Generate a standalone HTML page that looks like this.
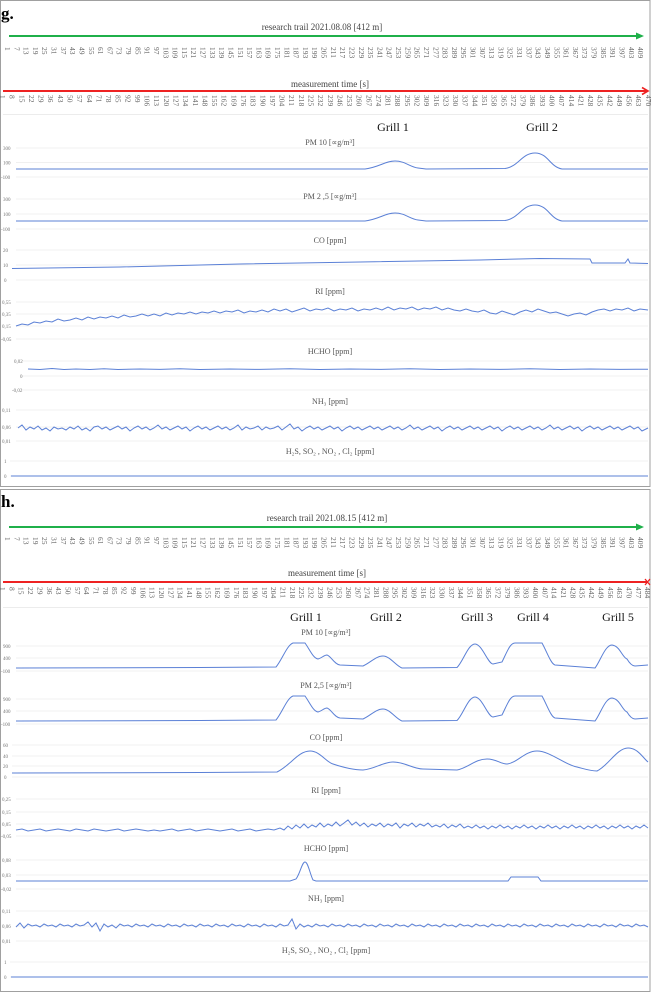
<!DOCTYPE html>
<html><head><meta charset="utf-8">
<style>
html,body{margin:0;padding:0;background:#fff;}
svg{display:block;}
.t{font-family:"Liberation Serif",serif;}
</style></head>
<body>
<svg width="651" height="992" viewBox="0 0 651 992" xmlns="http://www.w3.org/2000/svg" class="t">
<rect x="0.5" y="0.5" width="649.5" height="486" fill="#fff" stroke="#a0a0a0"/>
<rect x="0.5" y="489.5" width="649.5" height="502" fill="#fff" stroke="#a0a0a0"/>

<!-- ===== PANEL g ===== -->
<text x="1" y="19" font-size="17" font-weight="bold" fill="#000">g.</text>
<text x="322" y="30" font-size="9" fill="#444" text-anchor="middle">research trail  2021.08.08 [412 m]</text>
<line x1="9" y1="36" x2="637" y2="36" stroke="#1fb04a" stroke-width="2"/>
<polygon points="636,32.5 644,36 636,39.5" fill="#1fb04a"/>
<g font-size="7.5" fill="#666" transform="rotate(90)">
<text x="47" y="-5">1</text><text x="47" y="-14.3">7</text><text x="47" y="-23.6">13</text><text x="47" y="-32.9">19</text><text x="47" y="-42.2">25</text><text x="47" y="-51.6">31</text><text x="47" y="-60.9">37</text><text x="47" y="-70.2">43</text><text x="47" y="-79.5">49</text><text x="47" y="-88.8">55</text><text x="47" y="-98.1">61</text><text x="47" y="-107.4">67</text><text x="47" y="-116.7">73</text><text x="47" y="-126">79</text><text x="47" y="-135.3">85</text><text x="47" y="-144.7">91</text><text x="47" y="-154">97</text><text x="47" y="-163.3">103</text><text x="47" y="-172.6">109</text><text x="47" y="-181.9">115</text><text x="47" y="-191.2">121</text><text x="47" y="-200.5">127</text><text x="47" y="-209.8">133</text><text x="47" y="-219.1">139</text><text x="47" y="-228.4">145</text><text x="47" y="-237.8">151</text><text x="47" y="-247.1">157</text><text x="47" y="-256.4">163</text><text x="47" y="-265.7">169</text><text x="47" y="-275">175</text><text x="47" y="-284.3">181</text><text x="47" y="-293.6">187</text><text x="47" y="-302.9">193</text><text x="47" y="-312.2">199</text><text x="47" y="-321.5">205</text><text x="47" y="-330.9">211</text><text x="47" y="-340.2">217</text><text x="47" y="-349.5">223</text><text x="47" y="-358.8">229</text><text x="47" y="-368.1">235</text><text x="47" y="-377.4">241</text><text x="47" y="-386.7">247</text><text x="47" y="-396">253</text><text x="47" y="-405.3">259</text><text x="47" y="-414.6">265</text><text x="47" y="-424">271</text><text x="47" y="-433.3">277</text><text x="47" y="-442.6">283</text><text x="47" y="-451.9">289</text><text x="47" y="-461.2">295</text><text x="47" y="-470.5">301</text><text x="47" y="-479.8">307</text><text x="47" y="-489.1">313</text><text x="47" y="-498.4">319</text><text x="47" y="-507.7">325</text><text x="47" y="-517.1">331</text><text x="47" y="-526.4">337</text><text x="47" y="-535.7">343</text><text x="47" y="-545">349</text><text x="47" y="-554.3">355</text><text x="47" y="-563.6">361</text><text x="47" y="-572.9">367</text><text x="47" y="-582.2">373</text><text x="47" y="-591.5">379</text><text x="47" y="-600.8">385</text><text x="47" y="-610.2">391</text><text x="47" y="-619.5">397</text><text x="47" y="-628.8">403</text><text x="47" y="-638.1">409</text>
</g>
<text x="330" y="87" font-size="9" fill="#444" text-anchor="middle">measurement time  [s]</text>
<line x1="3" y1="91" x2="647" y2="91" stroke="#ee2222" stroke-width="2"/>
<polyline points="642,87.5 648,91 642,94.5" fill="none" stroke="#ee2222" stroke-width="1.6"/>
<g font-size="7.5" fill="#666" transform="rotate(90)">
<text x="95" y="0">1</text><text x="95" y="-9.6">8</text><text x="95" y="-19.3">15</text><text x="95" y="-28.9">22</text><text x="95" y="-38.6">29</text><text x="95" y="-48.2">36</text><text x="95" y="-57.8">43</text><text x="95" y="-67.5">50</text><text x="95" y="-77.1">57</text><text x="95" y="-86.8">64</text><text x="95" y="-96.4">71</text><text x="95" y="-106">78</text><text x="95" y="-115.7">85</text><text x="95" y="-125.3">92</text><text x="95" y="-135">99</text><text x="95" y="-144.6">106</text><text x="95" y="-154.2">113</text><text x="95" y="-163.9">120</text><text x="95" y="-173.5">127</text><text x="95" y="-183.2">134</text><text x="95" y="-192.8">141</text><text x="95" y="-202.4">148</text><text x="95" y="-212.1">155</text><text x="95" y="-221.7">162</text><text x="95" y="-231.4">169</text><text x="95" y="-241">176</text><text x="95" y="-250.6">183</text><text x="95" y="-260.3">190</text><text x="95" y="-269.9">197</text><text x="95" y="-279.6">204</text><text x="95" y="-289.2">211</text><text x="95" y="-298.8">218</text><text x="95" y="-308.5">225</text><text x="95" y="-318.1">232</text><text x="95" y="-327.8">239</text><text x="95" y="-337.4">246</text><text x="95" y="-347">253</text><text x="95" y="-356.7">260</text><text x="95" y="-366.3">267</text><text x="95" y="-376">274</text><text x="95" y="-385.6">281</text><text x="95" y="-395.2">288</text><text x="95" y="-404.9">295</text><text x="95" y="-414.5">302</text><text x="95" y="-424.2">309</text><text x="95" y="-433.8">316</text><text x="95" y="-443.4">323</text><text x="95" y="-453.1">330</text><text x="95" y="-462.7">337</text><text x="95" y="-472.4">344</text><text x="95" y="-482">351</text><text x="95" y="-491.6">358</text><text x="95" y="-501.3">365</text><text x="95" y="-510.9">372</text><text x="95" y="-520.6">379</text><text x="95" y="-530.2">386</text><text x="95" y="-539.8">393</text><text x="95" y="-549.5">400</text><text x="95" y="-559.1">407</text><text x="95" y="-568.8">414</text><text x="95" y="-578.4">421</text><text x="95" y="-588">428</text><text x="95" y="-597.7">435</text><text x="95" y="-607.3">442</text><text x="95" y="-617">449</text><text x="95" y="-626.6">456</text><text x="95" y="-636.2">463</text><text x="95" y="-645.9">470</text>
</g>
<line x1="3" y1="114.5" x2="648" y2="114.5" stroke="#ececec"/>

<text x="393" y="131" font-size="12" fill="#111" text-anchor="middle">Grill 1</text>
<text x="542" y="131" font-size="12" fill="#111" text-anchor="middle">Grill 2</text>

<g stroke="#ebebeb" stroke-width="0.8">
<line x1="16" y1="148" x2="648" y2="148"/><line x1="16" y1="162.5" x2="648" y2="162.5"/><line x1="16" y1="177" x2="648" y2="177"/>
<line x1="16" y1="199" x2="648" y2="199"/><line x1="16" y1="214" x2="648" y2="214"/><line x1="16" y1="229" x2="648" y2="229"/>
<line x1="16" y1="250" x2="648" y2="250"/><line x1="16" y1="265" x2="648" y2="265"/><line x1="16" y1="280" x2="648" y2="280"/>
<line x1="16" y1="302" x2="648" y2="302"/><line x1="16" y1="314" x2="648" y2="314"/><line x1="16" y1="326" x2="648" y2="326"/><line x1="16" y1="339" x2="648" y2="339"/>
<line x1="22" y1="361" x2="648" y2="361"/><line x1="22" y1="376" x2="648" y2="376"/><line x1="22" y1="390" x2="648" y2="390"/>
<line x1="16" y1="410" x2="648" y2="410"/><line x1="16" y1="427" x2="648" y2="427"/><line x1="16" y1="441" x2="648" y2="441"/>
<line x1="10" y1="461" x2="648" y2="461"/><line x1="10" y1="476" x2="648" y2="476"/>
</g>
<g font-size="5" fill="#777">
<text x="3" y="150">300</text><text x="3" y="164.5">100</text><text x="1" y="179">-100</text>
<text x="3" y="201">300</text><text x="3" y="216">100</text><text x="1" y="231">-100</text>
<text x="3" y="252">20</text><text x="3" y="267">10</text><text x="4" y="282">0</text>
<text x="2" y="304">0,55</text><text x="2" y="316">0,35</text><text x="2" y="328">0,15</text><text x="1" y="341">-0,05</text>
<text x="14" y="363">0,02</text><text x="20" y="378">0</text><text x="12" y="392">-0,02</text>
<text x="2" y="412">0,11</text><text x="2" y="429">0,06</text><text x="2" y="443">0,01</text>
<text x="4" y="463">1</text><text x="4" y="478">0</text>
</g>
<g font-size="8" fill="#555" text-anchor="middle">
<text x="330" y="145">PM 10 [∝g/m³]</text>
<text x="330" y="199">PM 2 ,5 [∝g/m³]</text>
<text x="330" y="243">CO [ppm]</text>
<text x="330" y="294">RI [ppm]</text>
<text x="330" y="354">HCHO [ppm]</text>
<text x="330" y="404">NH₃ [ppm]</text>
<text x="330" y="454">H₂S, SO₂ , NO₂ , Cl₂ [ppm]</text>
</g>
<g fill="none" stroke="#5b80d6" stroke-width="1">
<path d="M16,169 L365,169 C380,167 385,161 395,161 C405,161 410,167 418,168 L426,169 L505,168.5 C518,167 522,153 535,153 C548,153 550,167 562,169 L648,169"/>
<path d="M16,221 L365,221 C380,219 385,213 395,213 C405,213 410,219 418,220 L426,221 L505,220.5 C518,219 522,205 535,205 C548,205 550,219 562,221 L648,221"/>
<path d="M12,268.5 L120,267 L240,264 L360,262 L480,260 L540,258.5 L590,259 L592,263 L625,263 L628,259 L630,263 L648,263.5"/>
<path d="M16,326 L22,324 L28,325 L34,322 L40,323 L46,321 L52,322 L58,319 L64,321 L70,320 L76,318 L82,320 L88,317 L94,319 L100,317 L106,318 L112,316 L118,318 L124,315 L130,317 L136,316 L142,314 L148,316 L154,314 L160,316 L166,313 L172,315 L178,313 L184,314 L190,312 L196,314 L202,312 L208,313 L214,311 L220,313 L226,311 L232,312 L238,310 L244,313 L250,311 L256,312 L262,310 L268,312 L274,309 L280,311 L286,309 L292,312 L298,310 L304,308 L310,311 L316,309 L322,310 L328,308 L334,311 L340,309 L346,310 L352,308 L358,311 L364,309 L370,310 L376,308 L382,310 L388,307 L394,310 L400,308 L406,309 L412,307 L418,310 L424,308 L430,309 L436,307 L442,310 L448,308 L454,310 L460,311 L466,309 L472,311 L478,312 L484,310 L490,313 L496,314 L502,311 L508,313 L514,315 L520,312 L526,310 L532,312 L538,309 L544,311 L550,313 L556,312 L562,314 L568,316 L574,314 L580,313 L586,315 L592,312 L598,310 L604,309 L610,311 L616,309 L622,310 L628,308 L634,311 L640,309 L648,310"/>
<path d="M28,369 L40,369.5 L52,368.5 L64,369.5 L76,369 L90,369.5 L104,368.7 L118,369.5 L140,369 L160,369.4 L180,368.8 L200,369.5 L230,369 L260,369.4 L290,368.8 L320,369.5 L350,369 L380,369.4 L410,368.8 L440,369.5 L470,369 L500,369.4 L530,368.8 L560,369.5 L590,369 L620,369.4 L648,369.2"/>
<path d="M18,428 L22,425 L26,430 L30,427 L34,429 L38,426 L42,430 L46,428 L50,431 L54,427 L58,429 L62,428 L66,430 L70,427 L74,429 L78,426 L82,430 L86,428 L90,431 L94,427 L98,426 L102,429 L106,427 L110,430 L114,428 L118,426 L122,429 L126,427 L130,431 L134,428 L138,426 L142,429 L146,427 L150,430 L154,428 L158,425 L162,429 L166,427 L170,430 L174,428 L178,426 L182,429 L186,427 L190,431 L194,428 L198,426 L202,429 L206,427 L210,430 L214,428 L218,426 L222,429 L226,427 L230,430 L234,428 L238,425 L242,430 L246,427 L250,429 L254,428 L258,426 L262,430 L266,427 L270,429 L274,428 L278,426 L282,430 L286,427 L290,424 L294,429 L298,427 L302,431 L306,428 L310,426 L314,429 L318,427 L322,430 L326,428 L330,426 L334,429 L338,427 L342,431 L346,428 L350,426 L354,429 L358,427 L362,430 L366,428 L370,426 L374,429 L378,427 L382,430 L386,428 L390,426 L394,429 L398,427 L402,430 L406,428 L410,425 L414,429 L418,427 L422,430 L426,428 L430,426 L434,429 L438,427 L442,431 L446,428 L450,426 L454,429 L458,427 L462,430 L466,428 L470,426 L474,429 L478,427 L482,430 L486,428 L490,426 L494,429 L498,427 L502,431 L506,428 L510,426 L514,429 L518,427 L522,430 L526,428 L530,426 L534,429 L538,427 L542,430 L546,428 L550,425 L554,429 L558,427 L562,430 L566,428 L570,426 L574,429 L578,427 L582,431 L586,428 L590,426 L594,429 L598,427 L602,430 L606,428 L610,426 L614,429 L618,427 L622,430 L626,428 L630,426 L634,429 L638,427 L642,431 L648,428"/>
<path d="M11,476 L648,476"/>
</g>

<!-- ===== PANEL h ===== -->
<text x="1" y="507" font-size="17" font-weight="bold" fill="#000">h.</text>
<text x="327" y="521" font-size="9" fill="#444" text-anchor="middle">research trail 2021.08.15 [412 m]</text>
<line x1="9" y1="527" x2="637" y2="527" stroke="#1fb04a" stroke-width="2"/>
<polygon points="636,523.5 644,527 636,530.5" fill="#1fb04a"/>
<g font-size="7.5" fill="#666" transform="rotate(90)">
<text x="537" y="-5">1</text><text x="537" y="-14.3">7</text><text x="537" y="-23.6">13</text><text x="537" y="-32.9">19</text><text x="537" y="-42.2">25</text><text x="537" y="-51.6">31</text><text x="537" y="-60.9">37</text><text x="537" y="-70.2">43</text><text x="537" y="-79.5">49</text><text x="537" y="-88.8">55</text><text x="537" y="-98.1">61</text><text x="537" y="-107.4">67</text><text x="537" y="-116.7">73</text><text x="537" y="-126">79</text><text x="537" y="-135.3">85</text><text x="537" y="-144.7">91</text><text x="537" y="-154">97</text><text x="537" y="-163.3">103</text><text x="537" y="-172.6">109</text><text x="537" y="-181.9">115</text><text x="537" y="-191.2">121</text><text x="537" y="-200.5">127</text><text x="537" y="-209.8">133</text><text x="537" y="-219.1">139</text><text x="537" y="-228.4">145</text><text x="537" y="-237.8">151</text><text x="537" y="-247.1">157</text><text x="537" y="-256.4">163</text><text x="537" y="-265.7">169</text><text x="537" y="-275">175</text><text x="537" y="-284.3">181</text><text x="537" y="-293.6">187</text><text x="537" y="-302.9">193</text><text x="537" y="-312.2">199</text><text x="537" y="-321.5">205</text><text x="537" y="-330.9">211</text><text x="537" y="-340.2">217</text><text x="537" y="-349.5">223</text><text x="537" y="-358.8">229</text><text x="537" y="-368.1">235</text><text x="537" y="-377.4">241</text><text x="537" y="-386.7">247</text><text x="537" y="-396">253</text><text x="537" y="-405.3">259</text><text x="537" y="-414.6">265</text><text x="537" y="-424">271</text><text x="537" y="-433.3">277</text><text x="537" y="-442.6">283</text><text x="537" y="-451.9">289</text><text x="537" y="-461.2">295</text><text x="537" y="-470.5">301</text><text x="537" y="-479.8">307</text><text x="537" y="-489.1">313</text><text x="537" y="-498.4">319</text><text x="537" y="-507.7">325</text><text x="537" y="-517.1">331</text><text x="537" y="-526.4">337</text><text x="537" y="-535.7">343</text><text x="537" y="-545">349</text><text x="537" y="-554.3">355</text><text x="537" y="-563.6">361</text><text x="537" y="-572.9">367</text><text x="537" y="-582.2">373</text><text x="537" y="-591.5">379</text><text x="537" y="-600.8">385</text><text x="537" y="-610.2">391</text><text x="537" y="-619.5">397</text><text x="537" y="-628.8">403</text><text x="537" y="-638.1">409</text>
</g>
<text x="327" y="576" font-size="9" fill="#444" text-anchor="middle">measurement time [s]</text>
<line x1="3" y1="582" x2="648" y2="582" stroke="#ee2222" stroke-width="2"/>
<path d="M645,579 L650,585 M650,579 L645,585" stroke="#ee2222" stroke-width="1.3"/>
<g font-size="7.5" fill="#666" transform="rotate(90)">
<text x="587" y="0">1</text><text x="587" y="-9.4">8</text><text x="587" y="-18.7">15</text><text x="587" y="-28.1">22</text><text x="587" y="-37.4">29</text><text x="587" y="-46.8">36</text><text x="587" y="-56.1">43</text><text x="587" y="-65.5">50</text><text x="587" y="-74.8">57</text><text x="587" y="-84.2">64</text><text x="587" y="-93.5">71</text><text x="587" y="-102.9">78</text><text x="587" y="-112.2">85</text><text x="587" y="-121.6">92</text><text x="587" y="-130.9">99</text><text x="587" y="-140.3">106</text><text x="587" y="-149.6">113</text><text x="587" y="-159">120</text><text x="587" y="-168.3">127</text><text x="587" y="-177.7">134</text><text x="587" y="-187">141</text><text x="587" y="-196.4">148</text><text x="587" y="-205.7">155</text><text x="587" y="-215.1">162</text><text x="587" y="-224.4">169</text><text x="587" y="-233.8">176</text><text x="587" y="-243.1">183</text><text x="587" y="-252.5">190</text><text x="587" y="-261.8">197</text><text x="587" y="-271.2">204</text><text x="587" y="-280.5">211</text><text x="587" y="-289.9">218</text><text x="587" y="-299.2">225</text><text x="587" y="-308.6">232</text><text x="587" y="-317.9">239</text><text x="587" y="-327.3">246</text><text x="587" y="-336.6">253</text><text x="587" y="-346">260</text><text x="587" y="-355.3">267</text><text x="587" y="-364.7">274</text><text x="587" y="-374">281</text><text x="587" y="-383.4">288</text><text x="587" y="-392.7">295</text><text x="587" y="-402.1">302</text><text x="587" y="-411.4">309</text><text x="587" y="-420.8">316</text><text x="587" y="-430.1">323</text><text x="587" y="-439.5">330</text><text x="587" y="-448.8">337</text><text x="587" y="-458.2">344</text><text x="587" y="-467.5">351</text><text x="587" y="-476.9">358</text><text x="587" y="-486.2">365</text><text x="587" y="-495.6">372</text><text x="587" y="-504.9">379</text><text x="587" y="-514.3">386</text><text x="587" y="-523.6">393</text><text x="587" y="-533">400</text><text x="587" y="-542.3">407</text><text x="587" y="-551.7">414</text><text x="587" y="-561">421</text><text x="587" y="-570.4">428</text><text x="587" y="-579.7">435</text><text x="587" y="-589.1">442</text><text x="587" y="-598.4">449</text><text x="587" y="-607.8">456</text><text x="587" y="-617.1">463</text><text x="587" y="-626.5">470</text><text x="587" y="-635.8">477</text><text x="587" y="-645.2">484</text>
</g>
<line x1="3" y1="607.5" x2="648" y2="607.5" stroke="#ececec"/>

<g font-size="12" fill="#111" text-anchor="middle">
<text x="306" y="621">Grill 1</text><text x="386" y="621">Grill 2</text><text x="477" y="621">Grill 3</text><text x="533" y="621">Grill 4</text><text x="618" y="621">Grill 5</text>
</g>

<g stroke="#ebebeb" stroke-width="0.8">
<line x1="16" y1="646" x2="648" y2="646"/><line x1="16" y1="658" x2="648" y2="658"/><line x1="16" y1="671" x2="648" y2="671"/>
<line x1="16" y1="699" x2="648" y2="699"/><line x1="16" y1="711" x2="648" y2="711"/><line x1="16" y1="724" x2="648" y2="724"/>
<line x1="12" y1="745" x2="648" y2="745"/><line x1="12" y1="756" x2="648" y2="756"/><line x1="12" y1="766" x2="648" y2="766"/><line x1="12" y1="777" x2="648" y2="777"/>
<line x1="16" y1="799" x2="648" y2="799"/><line x1="16" y1="812" x2="648" y2="812"/><line x1="16" y1="824" x2="648" y2="824"/><line x1="16" y1="836" x2="648" y2="836"/>
<line x1="16" y1="860" x2="648" y2="860"/><line x1="16" y1="875" x2="648" y2="875"/><line x1="16" y1="889" x2="648" y2="889"/>
<line x1="16" y1="911" x2="648" y2="911"/><line x1="16" y1="926" x2="648" y2="926"/><line x1="16" y1="941" x2="648" y2="941"/>
<line x1="10" y1="962" x2="648" y2="962"/><line x1="10" y1="977" x2="648" y2="977"/>
</g>
<g font-size="5" fill="#777">
<text x="3" y="648">900</text><text x="3" y="660">400</text><text x="1" y="673">-100</text>
<text x="3" y="701">900</text><text x="3" y="713">400</text><text x="1" y="726">-100</text>
<text x="3" y="747">60</text><text x="3" y="758">40</text><text x="3" y="768">20</text><text x="4" y="779">0</text>
<text x="2" y="801">0,25</text><text x="2" y="814">0,15</text><text x="2" y="826">0,05</text><text x="1" y="838">-0,05</text>
<text x="2" y="862">0,08</text><text x="2" y="877">0,03</text><text x="1" y="891">-0,02</text>
<text x="2" y="913">0,11</text><text x="2" y="928">0,06</text><text x="2" y="943">0,01</text>
<text x="4" y="964">1</text><text x="4" y="979">0</text>
</g>
<g font-size="8" fill="#555" text-anchor="middle">
<text x="326" y="635">PM 10 [∝g/m³]</text>
<text x="326" y="688">PM 2,5 [∝g/m³]</text>
<text x="326" y="740">CO [ppm]</text>
<text x="326" y="793">RI [ppm]</text>
<text x="326" y="851">HCHO [ppm]</text>
<text x="326" y="901">NH₃ [ppm]</text>
<text x="326" y="953">H₂S, SO₂ , NO₂ , Cl₂ [ppm]</text>
</g>
<g fill="none" stroke="#5b80d6" stroke-width="1">
<path d="M16,668 L200,667.5 L276,667 C282,660 287,645 293,643 L305,643 C310,650 313,658 318,659 C322,658 324,655 327,655 C331,656 334,664 340,665 L363,666 C370,663 376,656 383,656 C390,656 396,666 402,668 L457,667.5 C463,662 468,644 475,644 C482,644 488,664 493,664 L502,662 C507,652 510,643 515,643 L542,643 C547,652 551,664 555,665 L595,668 C600,662 605,645 612,645 C620,646 622,657 627,659 C630,664 633,666 635,666 L648,665"/>
<path d="M16,721 L200,720.5 L276,720 C282,713 287,698 293,696 L305,696 C310,703 313,711 318,712 C322,711 324,708 327,708 C331,709 334,717 340,718 L363,719 C370,716 376,709 383,709 C390,709 396,719 402,721 L457,720.5 C463,715 468,697 475,697 C482,697 488,717 493,717 L502,715 C507,705 510,696 515,696 L542,696 C547,705 551,717 555,718 L595,721 C600,715 605,698 612,698 C620,699 622,710 627,712 C630,717 633,719 635,719 L648,718"/>
<path d="M12,773 L200,772.5 L277,772 C290,766 298,751 310,751 C320,751 326,762 333,764 C345,768 355,770 363,770 C375,769 383,762 393,762 C405,762 413,769 423,769 L457,770 C468,768 475,759 487,759 C497,759 500,764 507,764 C517,763 525,751 537,751 C550,751 565,765 577,767 C585,769 590,771 597,771 C608,766 617,748 628,748 C638,748 643,758 648,762"/>
<path d="M16,830 L22,829 L28,831 L34,830 L40,829 L46,831 L52,830 L58,829 L64,830 L70,831 L76,829 L82,830 L88,831 L94,829 L100,830 L106,831 L112,830 L118,829 L124,831 L130,830 L136,829 L142,830 L148,831 L154,830 L160,831 L166,830 L172,829 L178,831 L184,830 L190,829 L196,831 L202,830 L208,829 L214,830 L220,831 L226,830 L232,829 L238,831 L244,830 L250,829 L256,831 L262,830 L268,829 L274,830 L280,828 L284,830 L288,826 L292,829 L296,825 L300,828 L304,824 L308,828 L312,825 L316,827 L320,823 L324,827 L328,824 L332,826 L336,822 L340,826 L344,823 L348,820 L352,825 L356,822 L360,826 L364,823 L368,827 L372,824 L376,826 L380,823 L384,827 L388,824 L392,826 L396,823 L400,828 L404,824 L408,826 L412,823 L416,827 L420,824 L424,826 L428,823 L432,827 L436,825 L440,827 L444,824 L448,828 L452,825 L456,827 L460,824 L464,828 L468,826 L472,828 L476,825 L480,828 L484,826 L488,829 L492,826 L496,828 L500,825 L504,828 L508,826 L512,829 L516,826 L520,828 L524,825 L528,828 L532,826 L536,829 L540,826 L544,828 L548,825 L552,828 L556,826 L560,829 L564,826 L568,828 L572,825 L576,828 L580,826 L584,829 L588,826 L592,828 L596,825 L600,828 L604,826 L608,829 L612,826 L616,828 L620,825 L624,828 L628,826 L632,829 L636,826 L640,828 L644,825 L648,828"/>
<path d="M16,881 L290,881 L296,879 C300,874 302,862 305,862 C308,862 310,874 313,880 L316,881 L508,881 L511,877 L538,877 L541,881 L648,881"/>
<path d="M16,927 L20,923 L24,928 L28,924 L32,926 L36,925 L40,927 L44,924 L48,926 L52,925 L56,927 L60,924 L64,926 L68,925 L72,927 L76,924 L80,926 L84,925 L88,922 L92,927 L96,923 L100,931 L104,924 L108,927 L112,925 L116,928 L120,924 L124,926 L128,925 L132,927 L136,924 L140,926 L144,925 L148,927 L152,924 L156,926 L160,925 L164,927 L168,924 L172,926 L176,925 L180,927 L184,924 L188,926 L192,925 L196,927 L200,924 L204,926 L208,925 L212,927 L216,924 L220,926 L224,925 L228,927 L232,924 L236,926 L240,925 L244,927 L248,924 L252,926 L256,925 L260,927 L264,924 L268,926 L272,925 L276,927 L280,924 L284,926 L288,925 L292,919 L296,929 L300,924 L304,927 L308,925 L312,927 L316,924 L320,926 L324,925 L328,927 L332,924 L336,926 L340,925 L344,927 L348,924 L352,926 L356,925 L360,927 L364,924 L368,926 L372,925 L376,927 L380,924 L384,926 L388,925 L392,927 L396,924 L400,926 L404,925 L408,927 L412,924 L416,926 L420,925 L424,927 L428,924 L432,926 L436,925 L440,927 L444,924 L448,926 L452,925 L456,927 L460,924 L464,926 L468,925 L472,927 L476,924 L480,926 L484,925 L488,927 L492,924 L496,926 L500,925 L504,927 L508,924 L512,926 L516,925 L520,927 L524,924 L528,926 L532,925 L536,927 L540,924 L544,926 L548,925 L552,927 L556,924 L560,926 L564,925 L568,927 L572,924 L576,926 L580,925 L584,927 L588,924 L592,926 L596,925 L600,927 L604,924 L608,926 L612,925 L616,927 L620,924 L624,926 L628,925 L632,927 L636,924 L640,926 L644,925 L648,927"/>
<path d="M11,977 L648,977"/>
</g>
</svg>
</body></html>
